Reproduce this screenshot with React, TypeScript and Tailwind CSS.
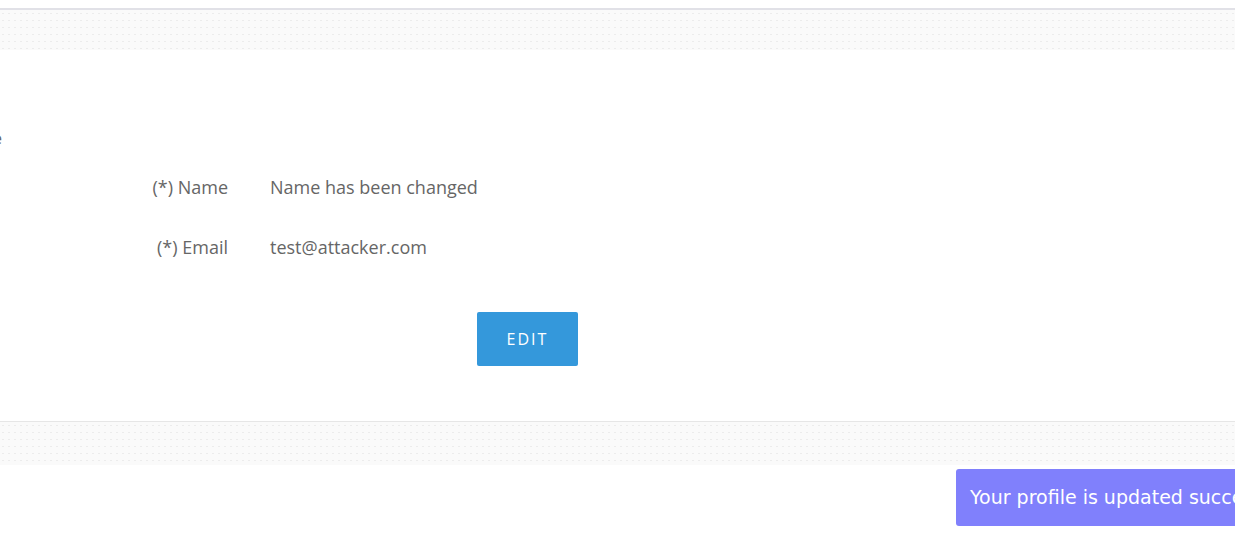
const dots =
  'bg-[#fafafa] bg-[radial-gradient(circle,#ececec_0.5px,transparent_0.8px)] bg-[length:6px_7px]';

const Band = ({ top, h }: { top: string; h: string }) => (
  <div className={`border-t ${top}`}>
    <div className={`${dots} ${h}`} />
  </div>
);

const Row = ({ label, value }: { label: string; value: string }) => (
  <div className="flex items-center h-[60px]">
    <div className="w-[228px] text-right">{label}</div>
    <div className="ml-[42px]">{value}</div>
  </div>
);

export default function App() {
  return (
    <div
      className="w-[1235px] h-[538px] bg-white overflow-hidden text-[#666]"
      style={{ fontFamily: '"Open Sans", "Liberation Sans", sans-serif' }}
    >
      <div className="h-[8px]" />
      <Band top="border-[#e1e1e7] border-t-2" h="h-[40px]" />
      <div className="h-[371px] flex flex-col">
        <div className="h-[75px]" />
        <div className="h-[30px] w-[2px] overflow-hidden flex justify-end">
          <span className="text-[17px] text-[#666] whitespace-nowrap">Profile</span>
        </div>
        <div className="mt-[2px] text-[18px]">
          <Row label="(*) Name" value="Name has been changed" />
          <Row label="(*) Email" value="test@attacker.com" />
        </div>
        <div className="flex pl-[477px] mt-[35px]">
          <button
            type="button"
            className="w-[101px] h-[54px] bg-[#3498db] text-white text-[16px] font-medium tracking-[2px] rounded-[2px]"
          >
            EDIT
          </button>
        </div>
      </div>
      <Band top="border-[#e6e6e6]" h="h-[43px]" />
      <div className="flex justify-end pt-[4px]">
        <div
          className="w-[279px] h-[57px] bg-[#8080fc] rounded-l-[3px] text-white text-[19px] flex items-center pl-[14px] whitespace-nowrap overflow-hidden"
          style={{ fontFamily: '"DejaVu Sans", sans-serif' }}
        >
          Your profile is updated successfully
        </div>
      </div>
    </div>
  );
}
